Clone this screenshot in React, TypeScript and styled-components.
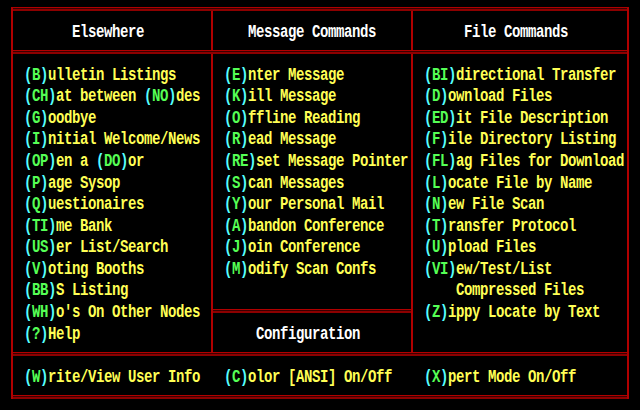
import React from "react";
import styled, { createGlobalStyle } from "styled-components";

const RED = "#b00000";
const CYAN = "#55ffff";
const GREEN = "#55ff55";
const YELLOW = "#ffff55";
const WHITE = "#ffffff";
const ROW = 21.58;

const Global = createGlobalStyle`
  html, body { margin: 0; padding: 0; background: #000; }
  body { width: 640px; height: 410px; overflow: hidden; }
`;

const Screen = styled.div`
  width: 640px;
  height: 410px;
  background: #000;
  padding: 7px 0 0 11px;
  box-sizing: border-box;
`;

const Frame = styled.div`
  width: 618px;
  box-sizing: border-box;
  border-left: 2px solid ${RED};
  border-right: 2px solid ${RED};
  display: flex;
  flex-direction: column;
`;

const HLine = styled.div`
  height: 4px;
  flex: none;
  background: linear-gradient(
    to bottom,
    ${RED} 0 1px,
    #3a0000 1px 2px,
    #8c0000 2px 4px
  );
`;

const Row = styled.div<{ $h: number }>`
  display: grid;
  grid-template-columns: 200px 200px 214px;
  height: ${(p) => p.$h}px;
`;

const Cell = styled.div<{ $divider?: boolean; $pad: number }>`
  box-sizing: border-box;
  border-right: ${(p) => (p.$divider ? `2px solid ${RED}` : "none")};
  padding: 10.7px 0 0 ${(p) => p.$pad}px;
  display: flex;
  flex-direction: column;
`;

const SplitCell = styled.div`
  box-sizing: border-box;
  border-right: 2px solid ${RED};
  display: flex;
  flex-direction: column;
`;

const ListPart = styled.div`
  flex: 1;
  padding: 10.7px 0 0 11px;
`;

const ConfigPart = styled.div`
  height: 39px;
  box-sizing: border-box;
  padding: 10.7px 0 0 43px;
`;

const Line = styled.div<{ $color?: string; $indent?: number }>`
  font-family: "Liberation Mono", "DejaVu Sans Mono", monospace;
  font-weight: bold;
  font-size: 14px;
  line-height: ${ROW}px;
  height: ${ROW}px;
  letter-spacing: -0.4px;
  white-space: pre;
  color: ${(p) => p.$color || YELLOW};
  padding-left: ${(p) => (p.$indent || 0) * 8}px;
  transform: scaleY(1.3);
`;

const Paren = styled.span`
  color: ${CYAN};
`;
const Key = styled.span`
  color: ${GREEN};
`;

function Item({ text, indent }: { text: string; indent?: number }) {
  const parts: React.ReactNode[] = [];
  const re = /\(([^)]*)\)/g;
  let last = 0;
  let m: RegExpExecArray | null;
  let i = 0;
  while ((m = re.exec(text))) {
    if (m.index > last) parts.push(<span key={i++}>{text.slice(last, m.index)}</span>);
    parts.push(
      <React.Fragment key={i++}>
        <Paren>(</Paren>
        <Key>{m[1]}</Key>
        <Paren>)</Paren>
      </React.Fragment>
    );
    last = m.index + m[0].length;
  }
  if (last < text.length) parts.push(<span key={i++}>{text.slice(last)}</span>);
  return <Line $indent={indent}>{parts}</Line>;
}

const col1 = [
  "(B)ulletin Listings",
  "(CH)at between (NO)des",
  "(G)oodbye",
  "(I)nitial Welcome/News",
  "(OP)en a (DO)or",
  "(P)age Sysop",
  "(Q)uestionaires",
  "(TI)me Bank",
  "(US)er List/Search",
  "(V)oting Booths",
  "(BB)S Listing",
  "(WH)o's On Other Nodes",
  "(?)Help",
];

const col2 = [
  "(E)nter Message",
  "(K)ill Message",
  "(O)ffline Reading",
  "(R)ead Message",
  "(RE)set Message Pointer",
  "(S)can Messages",
  "(Y)our Personal Mail",
  "(A)bandon Conference",
  "(J)oin Conference",
  "(M)odify Scan Confs",
];

const col3: { t: string; indent?: number }[] = [
  { t: "(BI)directional Transfer" },
  { t: "(D)ownload Files" },
  { t: "(ED)it File Description" },
  { t: "(F)ile Directory Listing" },
  { t: "(FL)ag Files for Download" },
  { t: "(L)ocate File by Name" },
  { t: "(N)ew File Scan" },
  { t: "(T)ransfer Protocol" },
  { t: "(U)pload Files" },
  { t: "(VI)ew/Test/List" },
  { t: "Compressed Files", indent: 4 },
  { t: "(Z)ippy Locate by Text" },
];

export default function App() {
  return (
    <>
      <Global />
      <Screen>
        <Frame>
          <HLine />
          <Row $h={39}>
            <Cell $divider $pad={59}>
              <Line $color={WHITE}>Elsewhere</Line>
            </Cell>
            <Cell $divider $pad={35}>
              <Line $color={WHITE}>Message Commands</Line>
            </Cell>
            <Cell $pad={51}>
              <Line $color={WHITE}>File Commands</Line>
            </Cell>
          </Row>
          <HLine />
          <Row $h={298}>
            <Cell $divider $pad={11}>
              {col1.map((t) => (
                <Item key={t} text={t} />
              ))}
            </Cell>
            <SplitCell>
              <ListPart>
                {col2.map((t) => (
                  <Item key={t} text={t} />
                ))}
              </ListPart>
              <HLine />
              <ConfigPart>
                <Line $color={WHITE}>Configuration</Line>
              </ConfigPart>
            </SplitCell>
            <Cell $pad={11}>
              {col3.map((c) => (
                <Item key={c.t} text={c.t} indent={c.indent} />
              ))}
            </Cell>
          </Row>
          <HLine />
          <Row $h={39}>
            <Cell $pad={11}>
              <Item text="(W)rite/View User Info" />
            </Cell>
            <Cell $pad={11}>
              <Item text="(C)olor [ANSI] On/Off" />
            </Cell>
            <Cell $pad={11}>
              <Item text="(X)pert Mode On/Off" />
            </Cell>
          </Row>
          <HLine />
        </Frame>
      </Screen>
    </>
  );
}
